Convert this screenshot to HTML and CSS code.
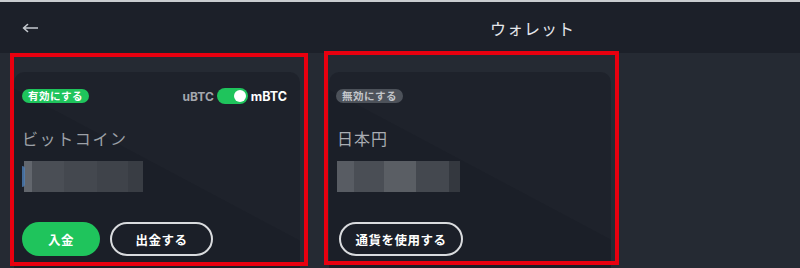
FILE: index.html
```html
<!DOCTYPE html>
<html lang="ja">
<head>
<meta charset="utf-8">
<title>ウォレット</title>
<link rel="stylesheet" href="styles.css">
</head>
<body>
<div class="screen">
  <header class="topbar">
    <span class="back">
      <svg width="16" height="10" viewBox="0 0 16 10"><path d="M15.5 5H2M5.5 1.5L1.5 5l4 3.5" fill="none" stroke="#c4c8ce" stroke-width="1.6" stroke-linecap="round" stroke-linejoin="round"/></svg>
    </span>
    <h1 class="title">ウォレット</h1>
  </header>
  <main class="content">
    <section class="card card-btc">
      <div class="card-top">
        <span class="badge badge-on">有効にする</span>
        <div class="unit-switch">
          <span class="unit unit-off">uBTC</span>
          <span class="toggle"><span class="knob"></span></span>
          <span class="unit unit-on">mBTC</span>
        </div>
      </div>
      <div class="currency">ビットコイン</div>
      <div class="blur">
        <span class="dot"></span>
        <span class="b b1"></span><span class="b b2"></span><span class="b b3"></span><span class="b b4"></span><span class="b b5"></span>
      </div>
      <div class="actions">
        <button class="btn btn-fill btn-in">入金</button>
        <button class="btn btn-line btn-out">出金する</button>
      </div>
    </section>
    <section class="card card-jpy">
      <div class="card-top">
        <span class="badge badge-off">無効にする</span>
      </div>
      <div class="currency">日本円</div>
      <div class="blur">
        <span class="b c1"></span><span class="b c2"></span><span class="b c3"></span><span class="b c4"></span><span class="b c5"></span>
      </div>
      <div class="actions">
        <button class="btn btn-line btn-use">通貨を使用する</button>
      </div>
    </section>
  </main>
  <div class="mark mark-left"></div>
  <div class="mark mark-right"></div>
</div>
</body>
</html>
```
FILE: styles.css
```css
* { box-sizing: border-box; margin: 0; padding: 0; }
html, body { width: 800px; height: 268px; overflow: hidden; background: #252a33; }
body { font-family: "Noto Sans CJK JP", "Noto Sans", sans-serif; }
.screen { position: relative; width: 800px; height: 268px; border-top: 2px solid #c9ccd0; background: #252a33; }
.topbar { height: 51px; background: #1c2029; display: flex; align-items: center; padding-left: 22px; }
.back { display: flex; width: 16px; height: 10px; }
.title { margin-left: 452px; font-size: 16px; font-weight: 400; color: #e4e6e9; letter-spacing: 1px; }
.content { display: flex; gap: 29px; padding: 19px 0 0 14px; }
.card { height: 200px; border-radius: 10px 10px 0 0; background: linear-gradient(28deg, #1b1f28 0%, #1b1f28 52%, #1e222b 52.3%, #1e222b 100%); display: flex; flex-direction: column; padding: 16px 13px 0 8px; }
.card-btc { width: 286px; }
.card-jpy { width: 282px; padding-left: 7px; }
.card-top { height: 16px; display: flex; align-items: center; justify-content: space-between; }
.badge { height: 14px; line-height: 14px; border-radius: 7px; font-size: 10.5px; font-weight: 700; padding: 0 6px; letter-spacing: 0.5px; }
.badge-on { background: #1fc45c; color: #fff; }
.badge-off { background: #4d525a; color: #c3c6ca; }
.unit-switch { display: flex; align-items: center; gap: 3px; font-family: "Inter", "Noto Sans", sans-serif; font-weight: 700; }
.unit { font-size: 12px; }
.unit-off { color: #a3a7ad; }
.unit-on { color: #fff; font-size: 12.5px; }
.toggle { width: 31px; height: 16px; border-radius: 8px; background: #1fc45c; display: flex; align-items: center; justify-content: flex-end; padding-right: 2px; }
.knob { width: 12px; height: 12px; border-radius: 50%; background: #fff; }
.currency { margin-top: 20px; height: 28px; line-height: 28px; font-size: 16px; color: #9da1a7; letter-spacing: 1.6px; }
.card-jpy .currency { color: #a9adb3; letter-spacing: 1px; padding-left: 1px; }
.blur { margin-top: 9px; height: 31px; display: flex; position: relative; }
.card-btc .blur { padding-left: 2px; }
.card-jpy .blur { padding-left: 1px; }
.dot { position: absolute; left: 0; top: 5px; width: 3px; height: 21px; border-radius: 0 3px 3px 0; background: #4f7fb8; opacity: 0.8; }
.b { display: block; height: 31px; }
.b1 { width: 8px; background: #62666d; }
.b2 { width: 32px; background: #4a4e55; }
.b3 { width: 33px; background: #44484f; }
.b4 { width: 31px; background: #3f434a; }
.b5 { width: 15px; background: #393d44; }
.c1 { width: 17px; background: #585c63; }
.c2 { width: 30px; background: #4a4e55; }
.c3 { width: 32px; background: #5a5e64; }
.c4 { width: 33px; background: #44484f; }
.c5 { width: 11px; background: #34383f; }
.actions { margin-top: 30px; display: flex; gap: 10px; }
.btn { height: 34px; border-radius: 17px; font-family: "Noto Sans CJK JP", sans-serif; font-size: 12.5px; font-weight: 700; color: #fff; letter-spacing: 0.5px; }
.btn-fill { background: #1fc45c; border: none; }
.btn-line { background: transparent; border: 2px solid #d9dbde; }
.btn-in { width: 78px; }
.btn-out { width: 103px; }
.btn-use { width: 124px; margin-left: 3px; }
.mark { position: absolute; border: 4.5px solid #e8000f; }
.mark-left { left: 10px; top: 51px; width: 298px; height: 213px; }
.mark-right { left: 324px; top: 49px; width: 295px; height: 214px; }
```
